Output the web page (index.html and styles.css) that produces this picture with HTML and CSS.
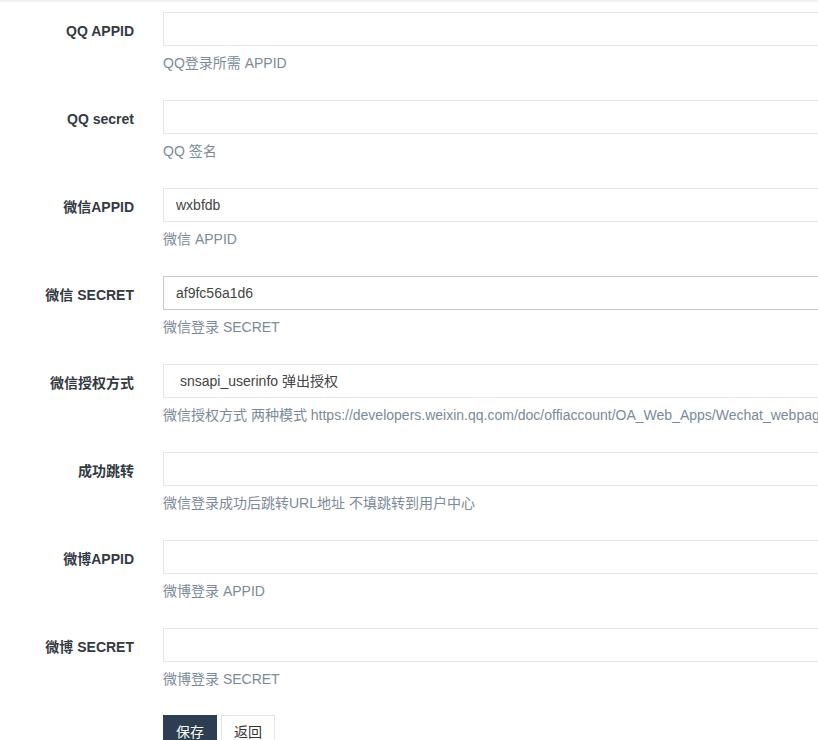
FILE: index.html
```html
<!DOCTYPE html>
<html lang="zh-CN">
<head>
  <meta charset="UTF-8" />
  <meta name="viewport" content="width=device-width, initial-scale=1" />
  <title>登录设置</title>
  <link rel="stylesheet" href="styles.css">
</head>
<body>
  <div class="top-rule"></div>

  <form class="settings-form">
    <div class="form-row">
      <label class="form-label">QQ APPID</label>
      <div class="form-field">
        <input class="form-input" type="text" value="">
        <p class="help-text">QQ登录所需 APPID</p>
      </div>
    </div>

    <div class="form-row">
      <label class="form-label">QQ secret</label>
      <div class="form-field">
        <input class="form-input" type="text" value="">
        <p class="help-text">QQ 签名</p>
      </div>
    </div>

    <div class="form-row">
      <label class="form-label">微信APPID</label>
      <div class="form-field">
        <input class="form-input" type="text" value="wxbfdb">
        <p class="help-text">微信 APPID</p>
      </div>
    </div>

    <div class="form-row">
      <label class="form-label">微信 SECRET</label>
      <div class="form-field">
        <input class="form-input is-focused" type="text" value="af9fc56a1d6">
        <p class="help-text">微信登录 SECRET</p>
      </div>
    </div>

    <div class="form-row">
      <label class="form-label">微信授权方式</label>
      <div class="form-field">
        <select class="form-input form-select">
          <option>snsapi_userinfo 弹出授权</option>
          <option>snsapi_base 静默授权</option>
        </select>
        <p class="help-text">微信授权方式 两种模式 https://developers.weixin.qq.com/doc/offiaccount/OA_Web_Apps/Wechat_webpage_authorization.html</p>
      </div>
    </div>

    <div class="form-row">
      <label class="form-label">成功跳转</label>
      <div class="form-field">
        <input class="form-input" type="text" value="">
        <p class="help-text">微信登录成功后跳转URL地址 不填跳转到用户中心</p>
      </div>
    </div>

    <div class="form-row">
      <label class="form-label">微博APPID</label>
      <div class="form-field">
        <input class="form-input" type="text" value="">
        <p class="help-text">微博登录 APPID</p>
      </div>
    </div>

    <div class="form-row">
      <label class="form-label">微博 SECRET</label>
      <div class="form-field">
        <input class="form-input" type="text" value="">
        <p class="help-text">微博登录 SECRET</p>
      </div>
    </div>

    <div class="form-row form-actions">
      <div></div>
      <div class="form-field">
        <button class="btn btn-primary" type="submit">保存</button>
        <button class="btn btn-default" type="button">返回</button>
      </div>
    </div>
  </form>
</body>
</html>
```

FILE: styles.css
```css
/* Reset and base styles */
* {
  margin: 0;
  padding: 0;
  box-sizing: border-box;
}

html, body {
  height: 100%;
  overflow: hidden;
}

body {
  font-family: "Liberation Sans", Arial, "Noto Sans CJK SC", sans-serif;
  font-size: 14px;
  line-height: 20px;
  color: #333;
  background: #fff;
}

.top-rule {
  height: 2px;
  background: #f1f1f1;
}

.settings-form {
  padding-top: 10px;
}

.form-row {
  display: grid;
  grid-template-columns: 134px 1fr;
  column-gap: 29px;
  margin-bottom: 27px;
}

.form-label {
  text-align: right;
  font-weight: 700;
  color: #333a42;
  padding-top: 9px;
  white-space: nowrap;
}

.form-field {
  min-width: 0;
}

.form-input {
  display: block;
  width: 900px;
  height: 34px;
  padding: 6px 12px;
  border: 1px solid #e6e6e6;
  border-radius: 0;
  background: #fff;
  font-family: inherit;
  font-size: 14px;
  color: #444;
  outline: none;
}

.form-input.is-focused {
  border-color: #c9c9c9;
}

.form-select {
  appearance: none;
  -webkit-appearance: none;
  padding-left: 16px;
}

.help-text {
  margin-top: 7px;
  color: #7b8a99;
  white-space: nowrap;
}

/* Buttons */
.form-actions {
  margin-top: -1px;
}

.btn {
  display: inline-block;
  height: 34px;
  padding: 6px 12px;
  font-family: inherit;
  font-size: 14px;
  line-height: 20px;
  border: 1px solid transparent;
  border-radius: 0;
  cursor: pointer;
}

.btn-primary {
  background: #2c3e50;
  border-color: #2c3e50;
  color: #fff;
}

.btn-default {
  background: #fff;
  border-color: #e3e3e3;
  color: #333;
}
```
